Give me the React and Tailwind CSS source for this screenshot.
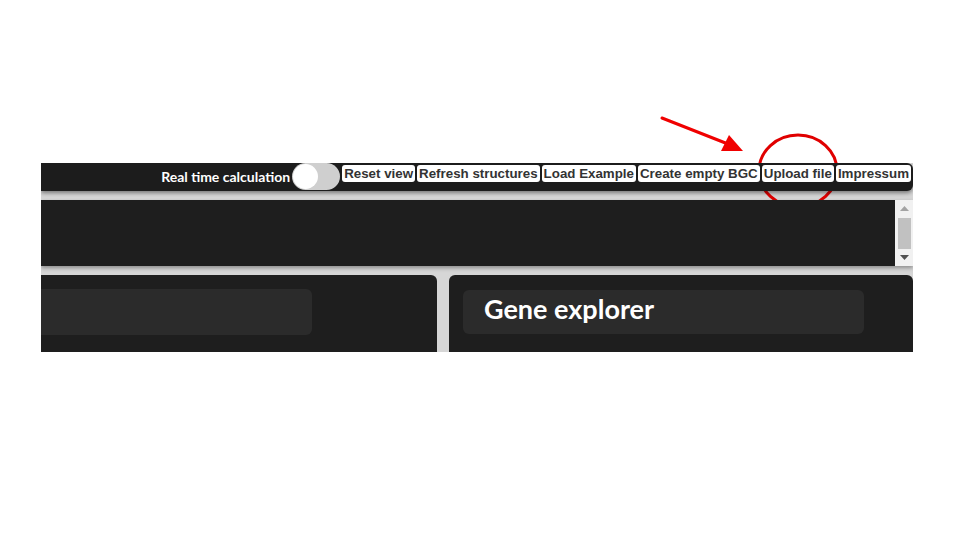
import React from "react";

const buttons = ["Reset view", "Refresh structures", "Load Example", "Create empty BGC", "Upload file", "Impressum"];

export default function App() {
  return (
    <div className="relative w-[960px] h-[540px] bg-white overflow-hidden">
      <div className="pt-[163px] pl-[41px]">
        <div className="w-[872px] h-[189px] overflow-hidden bg-[#d6d6d6] flex flex-col">
          {/* top bar */}
          <div className="h-[28px] bg-[#1c1c1c] rounded-r-[6px] flex items-start justify-end pr-[2px] shadow-[0_2px_4px_rgba(0,0,0,0.45)] relative z-10">
            <span className="self-center text-white text-[14px] font-bold mr-[2px] leading-none" style={{ fontFamily: "Lato, sans-serif" }}>
              Real time calculation
            </span>
            <div className="w-[48px] h-[27px] rounded-full bg-[#cfcfcf] flex items-center mr-[2px] shrink-0">
              <div className="w-[25px] h-[25px] rounded-full bg-white ml-[1px]" />
            </div>
            <div className="flex gap-[2px] mt-[2px]">
              {buttons.map((b) => (
                <button
                  key={b}
                  className="h-[17px] bg-white rounded-[3px] px-[2px] text-[13.33px] font-bold text-[#333] leading-[17px] whitespace-nowrap"
                  style={{ fontFamily: "'Liberation Sans', Arial, sans-serif" }}
                >
                  {b}
                </button>
              ))}
            </div>
          </div>
          {/* second row */}
          <div className="mt-[9px] h-[66px] flex shadow-[0_2px_4px_rgba(0,0,0,0.35)] relative z-10">
            <div className="flex-1 bg-[#1e1e1e]" />
            <div className="w-[18px] bg-[#f1f1f1] flex flex-col items-center pt-[6px] pb-[6px]">
              <svg width="9" height="5" viewBox="0 0 9 5"><path d="M0 5 L4.5 0 L9 5 Z" fill="#a3a3a3" /></svg>
              <div className="w-[13px] h-[31px] bg-[#c1c1c1] mt-[7px]" />
              <div className="flex-1" />
              <svg width="9" height="5" viewBox="0 0 9 5"><path d="M0 0 L4.5 5 L9 0 Z" fill="#505050" /></svg>
            </div>
          </div>
          {/* third row */}
          <div className="mt-[9px] flex-1 flex gap-[12px]">
            <div className="w-[396px] bg-[#1e1e1e] rounded-tr-[6px] pt-[14px]">
              <div className="w-[271px] h-[46px] bg-[#2b2b2b] rounded-r-[6px]" />
            </div>
            <div className="flex-1 bg-[#1e1e1e] rounded-t-[6px] pt-[15px] pl-[14px]">
              <div className="w-[401px] h-[44px] bg-[#2b2b2b] rounded-[6px] flex items-center pl-[21px] pb-[8px]">
                <span className="text-white text-[27px] font-bold leading-none" style={{ fontFamily: "Lato, sans-serif" }}>
                  Gene explorer
                </span>
              </div>
            </div>
          </div>
        </div>
      </div>
      {/* annotations */}
      <svg className="absolute left-0 top-0" width="960" height="540" viewBox="0 0 960 540">
        <line x1="662" y1="118" x2="728" y2="144" stroke="#f00000" strokeWidth="3" strokeLinecap="round" />
        <path d="M743 151 L721 151 L729 135 Z" fill="#f00000" />
        <ellipse cx="798" cy="171" rx="39" ry="36" fill="none" stroke="#e00000" strokeWidth="3" />
      </svg>
    </div>
  );
}
